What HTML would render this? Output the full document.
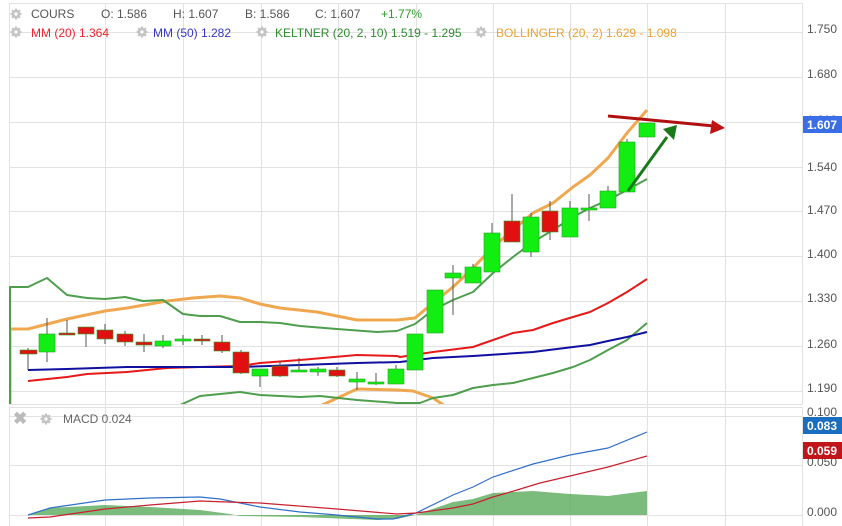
<!DOCTYPE html>
<html><head><meta charset="utf-8"><style>
body{margin:0;background:#fff;width:842px;height:526px;overflow:hidden}
svg{display:block;font-family:"Liberation Sans",sans-serif}
</style></head><body>
<svg width="842" height="526" viewBox="0 0 842 526">
<defs>
<g id="gear"><circle r="3.2" fill="none" stroke="#c4c4c4" stroke-width="2.2"/><g stroke="#c4c4c4" stroke-width="2.2"><line x1="0" y1="-5.5" x2="0" y2="5.5"/><line x1="-5.5" y1="0" x2="5.5" y2="0"/><line x1="-3.9" y1="-3.9" x2="3.9" y2="3.9"/><line x1="-3.9" y1="3.9" x2="3.9" y2="-3.9"/></g><circle r="1.6" fill="#fff"/></g>
</defs>
<g stroke="#e2e2e2" stroke-width="1" fill="none">
<rect x="9.5" y="3.5" width="793" height="401"/>
<rect x="9.5" y="407.5" width="793" height="130"/>
<path d="M105.5 3V526M183.5 3V526M261.5 3V526M338.5 3V526M416.5 3V526M493.5 3V526M570.5 3V526M647.5 3V526M725.5 3V526"/>
<path d="M9 32.5H802M9 77.5H802M9 122.5H802M9 167.5H802M9 211.5H802M9 256.5H802M9 301.5H802M9 346.5H802M9 391.5H802"/>
<path d="M9 416.5H802M9 465.5H802M9 515.5H802"/>
</g>
<!-- header -->
<g font-size="12">
<use href="#gear" x="16" y="14"/><text x="31" y="18" fill="#555">COURS</text>
<text x="101" y="18" fill="#555">O: 1.586</text><text x="173" y="18" fill="#555">H: 1.607</text>
<text x="245" y="18" fill="#555">B: 1.586</text><text x="315" y="18" fill="#555">C: 1.607</text>
<text x="381" y="18" fill="#2a9a2a">+1.77%</text>
<use href="#gear" x="16" y="32"/><text x="31" y="37" fill="#e8262a">MM (20) 1.364</text>
<use href="#gear" x="142" y="32"/><text x="153" y="37" fill="#3535c8">MM (50) 1.282</text>
<use href="#gear" x="262" y="32"/><text x="275" y="37" fill="#2e8b2e">KELTNER (20, 2, 10) 1.519 - 1.295</text>
<use href="#gear" x="481" y="32"/><text x="496" y="37" fill="#f0a030">BOLLINGER (20, 2) 1.629 - 1.098</text>
</g>
<!-- axis -->
<g font-size="12" fill="#555">
<text x="807" y="33">1.750</text><text x="807" y="78">1.680</text><text x="807" y="124">1.610</text>
<text x="807" y="171">1.540</text><text x="807" y="214">1.470</text><text x="807" y="258">1.400</text>
<text x="807" y="302">1.330</text><text x="807" y="348">1.260</text><text x="807" y="392">1.190</text>
<text x="807" y="416">0.100</text><text x="807" y="466">0.050</text><text x="807" y="516">0.000</text>
</g>
<rect x="803" y="116" width="39" height="17" fill="#3a6ee8"/><text x="807" y="129" font-size="12" font-weight="bold" fill="#fff">1.607</text>
<rect x="803" y="417" width="39" height="17" fill="#1a6ec0"/><text x="807" y="430" font-size="12" font-weight="bold" fill="#fff">0.083</text>
<rect x="803" y="442" width="39" height="17" fill="#c0151a"/><text x="807" y="455" font-size="12" font-weight="bold" fill="#fff">0.059</text>
<!-- lines -->
<clipPath id="pc"><rect x="9" y="3" width="793" height="401"/></clipPath>
<g clip-path="url(#pc)" fill="none" stroke-linejoin="round">
<path stroke="#f0a850" stroke-width="3" d="M10 404V329L28 329L67 319L105 311L127 308L167 301L193 298L220 296L240 298L260 304L280 308L317 312L357 320L397 320L415 318L433 303L453 287L473 268L493 247L513 230L533 213L553 203L573 187L590 175L608 158L627 133L647 110"/>
<path stroke="#f0a850" stroke-width="3" d="M320 406L357 389L397 390L413 391L433 398L445 406"/>
<path stroke="#4e9e4e" stroke-width="2" d="M10 404V287L28 287L47 278L67 295L87 298L105 299L125 297L143 301L163 300L183 314L200 316L220 316L240 322L260 322L280 323L300 326L337 329L377 332L397 331L415 324L433 310L453 300L473 292L493 273L513 257L533 242L553 230L573 217L590 208L608 200L627 190L647 179"/>
<path stroke="#4e9e4e" stroke-width="2" d="M178 406L200 396L240 392L260 395L300 397L320 396L357 400L397 403L420 403L433 398L453 395L473 388L493 385L513 383L533 378L553 373L573 367L590 360L608 350L627 340L647 323"/>
<path stroke="#e81818" stroke-width="2" d="M28 381L67 377L87 374L127 372L167 368L200 367L240 366L260 363L300 360L357 355L397 356L400 357L433 352L473 347L513 333L533 330L553 323L573 317L590 312L608 303L627 292L647 279"/>
<path stroke="#1010a0" stroke-width="2" d="M28 370L67 369L127 367L167 367L240 367L300 365L357 363L400 362L433 358L473 356L533 352L573 347L590 345L608 341L627 337L647 332"/>
</g>
<!-- candles -->
<g stroke="#555" stroke-width="1">
<path d="M28 348V370M47 318V362M67 320V335M86 327V347M105 324V344M125 331V346M144 334V352M163 335V348M183 335V345M202 335V345M222 335V353M241 350V374M260 369V387M280 361V377M299 358V372M318 367V376M337 367V377M357 372V390M376 373V385M396 365V384M453 265V315M473 264V283M492 223V272M512 194V242M531 213V257M550 201V240M570 201V237M589 194V221M608 186V208M627 139V192"/>
</g>
<g stroke="#2aa02a" stroke-width="0.6">
<g fill="#e01010">
<rect x="20" y="350" width="17" height="4"/><rect x="59" y="333" width="16" height="2"/><rect x="78" y="327" width="16" height="7"/><rect x="97" y="330" width="16" height="9"/><rect x="117" y="334" width="16" height="8"/><rect x="136" y="342" width="16" height="3"/><rect x="194" y="339" width="16" height="2"/><rect x="214" y="342" width="16" height="9"/><rect x="233" y="352" width="16" height="21"/><rect x="272" y="366" width="16" height="10"/><rect x="329" y="370" width="16" height="6"/><rect x="504" y="221" width="16" height="21"/><rect x="542" y="211" width="16" height="21"/>
</g>
<g fill="#12ee12">
<rect x="39" y="334" width="16" height="18"/><rect x="155" y="341" width="16" height="5"/><rect x="175" y="339" width="16" height="2"/><rect x="252" y="369" width="16" height="7"/><rect x="291" y="370" width="16" height="2"/><rect x="310" y="369" width="16" height="3"/><rect x="349" y="379" width="16" height="3"/><rect x="368" y="382" width="16" height="2"/><rect x="388" y="369" width="16" height="15"/><rect x="407" y="334" width="16" height="36"/><rect x="427" y="290" width="16" height="43"/><rect x="445" y="273" width="16" height="5"/><rect x="465" y="267" width="16" height="16"/><rect x="484" y="233" width="16" height="39"/><rect x="523" y="217" width="16" height="35"/><rect x="562" y="208" width="16" height="29"/><rect x="581" y="208" width="16" height="2"/><rect x="600" y="191" width="16" height="17"/><rect x="619" y="142" width="16" height="50"/><rect x="639" y="123" width="16" height="14"/>
</g>
</g>
<!-- arrows -->
<path d="M608 116L714 126" stroke="#b01010" stroke-width="3"/>
<path d="M712 120L725 128L710 134Z" fill="#c01010"/>
<path d="M628 191L667 137" stroke="#1a7a1a" stroke-width="3"/>
<path d="M663 129L677 125L674 140Z" fill="#1a7a1a"/>
<!-- MACD -->
<g font-size="12"><text x="13" y="424" fill="#bbb" font-size="17" font-weight="bold">✖</text><use href="#gear" x="46" y="419"/><text x="63" y="423" fill="#666">MACD 0.024</text></g>
<path fill="#5aaa5a" fill-opacity="0.8" d="M28 515L50 508L105 505L150 507L200 510L230 514L240 516L300 517L377 520L397 519L415 515L453 502L473 499L493 493L533 491L570 494L608 496L647 491L647 515Z"/>
<g fill="none" stroke-width="1.2">
<path stroke="#3070c8" d="M28 515L50 508L105 500L150 498L200 497L220 499L260 507L300 512L337 515L377 519L393 519L416 513L453 495L473 487L493 477L533 464L570 455L608 448L647 432"/>
<path stroke="#c82030" d="M28 518L50 517L105 509L150 505L200 501L227 502L260 503L337 509L397 514L416 513L453 508L473 504L493 497L517 490L540 483L570 476L608 467L647 456"/>
</g>
</svg>
</body></html>
